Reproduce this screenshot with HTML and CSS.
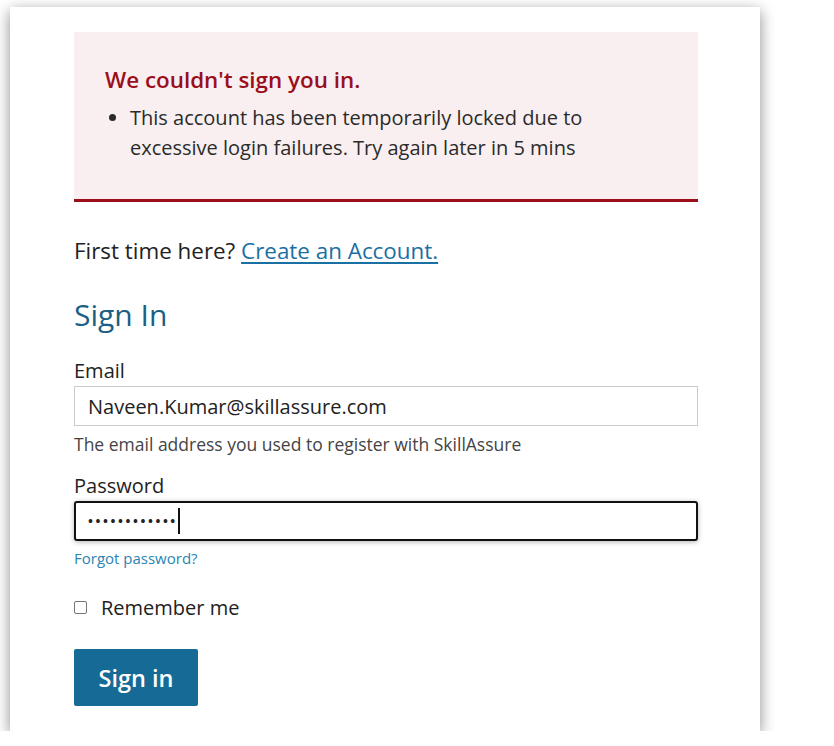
FILE: index.html
```html
<!DOCTYPE html>
<html lang="en">
<head>
<meta charset="utf-8">
<title>Sign In</title>
<link rel="stylesheet" href="styles.css">
</head>
<body>
<div class="card">
  <div class="alert">
    <h2 class="alert-title">We couldn't sign you in.</h2>
    <ul class="alert-list">
      <li>This account has been temporarily locked due to excessive login failures. Try again later in 5 mins</li>
    </ul>
  </div>
  <p class="first-time">First time here? <a href="#" class="create-link">Create an Account.</a></p>
  <h1 class="title">Sign In</h1>
  <form class="form">
    <label class="label" for="email">Email</label>
    <input class="input" id="email" type="text" value="Naveen.Kumar@skillassure.com">
    <div class="help">The email address you used to register with SkillAssure</div>
    <label class="label label-pw" for="pw">Password</label>
    <div class="input input-focus"><span class="dots">••••••••••••</span><span class="caret"></span></div>
    <a href="#" class="forgot">Forgot password?</a>
    <label class="remember"><span class="check"></span><span>Remember me</span></label>
    <button type="button" class="btn">Sign in</button>
  </form>
</div>
</body>
</html>
```
FILE: styles.css
```css
html, body {
  margin: 0;
  padding: 0;
  background: #ffffff;
}
body {
  font-family: "Open Sans", "Noto Sans", sans-serif;
  color: #222222;
  padding: 7px 0 0 10px;
}
.card {
  width: 750px;
  height: 724px;
  box-sizing: border-box;
  background: #ffffff;
  box-shadow: 0 4px 14px rgba(0, 0, 0, 0.45);
  padding: 25px 62px 0 64px;
  display: flex;
  flex-direction: column;
}
.alert {
  background: #f9eff0;
  border-bottom: 3px solid #9b0e1c;
  padding: 34px 30px 36px 31px;
}
.alert-title {
  margin: 0;
  font-size: 22.4px;
  line-height: 28px;
  font-weight: 600;
  color: #9b0e1c;
}
.alert-list {
  margin: 9px 0 0 0;
  padding: 0 0 0 25px;
  font-size: 20px;
  line-height: 30px;
  color: #2b2b2b;
}
.first-time {
  margin: 35px 0 0 0;
  font-size: 22.4px;
  line-height: 28px;
  color: #222222;
}
.create-link {
  color: #1a6fa3;
  text-decoration: underline;
  text-underline-offset: 3px;
}
.title {
  margin: 30px 0 0 0;
  font-size: 30px;
  line-height: 40px;
  font-weight: 400;
  color: #1b5f85;
}
.form {
  display: flex;
  flex-direction: column;
  align-items: flex-start;
}
.label {
  margin-top: 23px;
  font-size: 20px;
  line-height: 26px;
  color: #222222;
}
.label-pw {
  margin-top: 18px;
}
.input {
  margin-top: 2px;
  width: 624px;
  height: 40px;
  box-sizing: border-box;
  border: 1px solid #cccccc;
  padding: 0 13px;
  font-family: "Open Sans", "Noto Sans", sans-serif;
  font-size: 20px;
  color: #222222;
  background: #ffffff;
  outline: none;
}
.input-focus {
  border: 2px solid #111111;
  border-radius: 3px;
  box-shadow: 0 1px 5px rgba(0, 0, 0, 0.3);
  display: flex;
  align-items: center;
  padding-left: 12px;
}
.dots {
  font-size: 13px;
  letter-spacing: 2.6px;
  color: #222222;
  font-weight: 700;
}
.caret {
  width: 2px;
  height: 26px;
  background: #111111;
  margin-left: 0;
}
.help {
  margin-top: 7px;
  font-size: 17.5px;
  line-height: 22px;
  color: #444444;
}
.forgot {
  margin-top: 7px;
  font-size: 15px;
  line-height: 20px;
  color: #2a84b4;
  text-decoration: none;
}
.remember {
  margin-top: 27px;
  display: flex;
  align-items: center;
  font-size: 20px;
  line-height: 26px;
  color: #222222;
}
.check {
  width: 11px;
  height: 11px;
  border: 1px solid #777777;
  border-radius: 2px;
  margin: 0 14px 1px 0;
  background: #ffffff;
}
.btn {
  margin-top: 28px;
  width: 124px;
  height: 57px;
  border: none;
  border-radius: 2px;
  background: #156b96;
  color: #ffffff;
  font-family: "Open Sans", "Noto Sans", sans-serif;
  font-size: 23.5px;
  font-weight: 600;
  padding: 0;
}
```
